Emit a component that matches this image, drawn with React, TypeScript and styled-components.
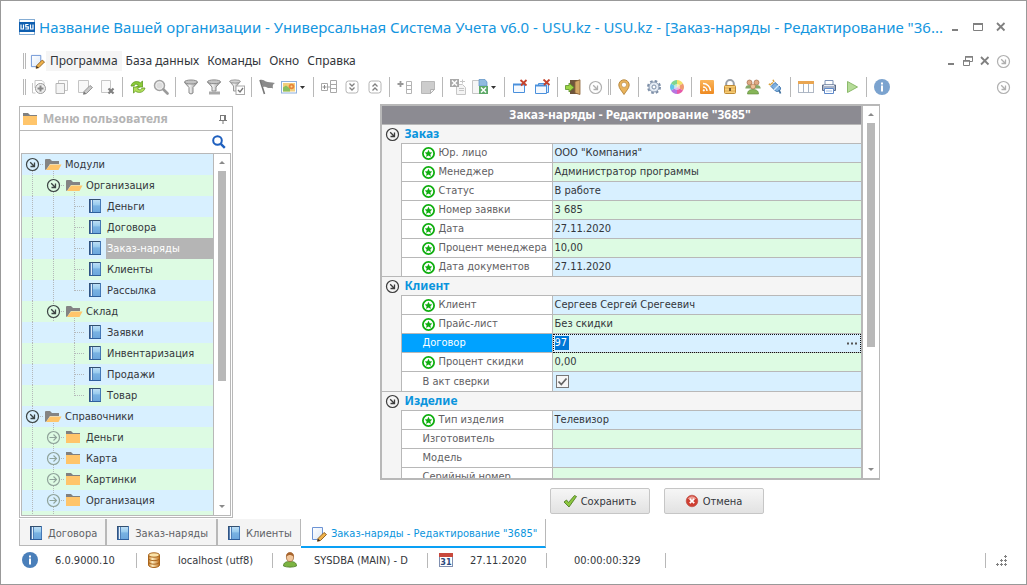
import React from "react";
import styled, { createGlobalStyle, css } from "styled-components";

/* ---------- tokens ---------- */
const line = "#b8b8b8";
const blue = "#0a94dd";
const sky = "#d8f0ff";
const mint = "#ddfbe3";
const ui = `"DejaVu Sans Condensed", "DejaVu Sans", sans-serif`;
const title = `"Noto Sans", "Open Sans", sans-serif`;

const GlobalStyle = createGlobalStyle`
  * { box-sizing: border-box; }
  body { margin: 0; background: #fff; color: #33363b; font: 11px/15px ${ui}; }
  button, input { font: inherit; color: inherit; }
  svg { display: block; flex: none; }
`;

/* ---------- icons ---------- */
type IconProps = { size?: number; children: React.ReactNode; box?: number };
const Icon = ({ size = 16, box = 16, children }: IconProps) => (
  <svg width={size} height={size} viewBox={`0 0 ${box} ${box}`} fill="none" aria-hidden="true">
    {children}
  </svg>
);

const Gradients = () => (
  <DefsSvg width="0" height="0" aria-hidden="true">
    <defs>
      <linearGradient id="book" x1="0" y1="0" x2="0" y2="1">
        <stop offset="0" stopColor="#c4e2f7" />
        <stop offset=".4" stopColor="#9accee" />
        <stop offset=".5" stopColor="#79b2e2" />
        <stop offset="1" stopColor="#6aa5dc" />
      </linearGradient>
      <linearGradient id="page" x1="0" y1="0" x2="1" y2="1">
        <stop offset="0" stopColor="#ffffff" />
        <stop offset="1" stopColor="#dce8f8" />
      </linearGradient>
      <linearGradient id="rss" x1="0" y1="0" x2="0" y2="1">
        <stop offset="0" stopColor="#fbb55a" />
        <stop offset="1" stopColor="#ee8a22" />
      </linearGradient>
      <linearGradient id="gold" x1="0" y1="0" x2="1" y2="0">
        <stop offset="0" stopColor="#c77a24" />
        <stop offset=".35" stopColor="#fff0c4" />
        <stop offset="1" stopColor="#c06f1c" />
      </linearGradient>
      <linearGradient id="grey" x1="0" y1="0" x2="1" y2="0">
        <stop offset="0" stopColor="#8f8f8f" />
        <stop offset=".4" stopColor="#f2f2f2" />
        <stop offset="1" stopColor="#8a8a8a" />
      </linearGradient>
    </defs>
  </DefsSvg>
);
const DefsSvg = styled.svg`
  position: absolute;
`;

const AppLogo = () => (
  <svg width="16" height="16" viewBox="0 0 16 16" role="img" aria-label="USU">
    <rect x="0.5" y="0.5" width="15" height="15" fill="#fff" stroke="#0a5aa8" strokeDasharray="1 1" />
    <rect x="0" y="3" width="16" height="10" fill="#0f5fb0" />
    <path d="M2 5.500v4.500h2.500v-4.500M9.500 5.500H6.800v2.300h2.500V10H6.300M11.500 5.500v4.500h2.500v-4.500" stroke="#fff" strokeWidth="1.200" fill="none" />
  </svg>
);

const PageEdit = ({ grey, size = 16 }: { grey?: boolean; size?: number }) => (
  <Icon size={size}>
    <path d="M1.500 1.500h10v8l-3 4h-7z" fill={grey ? "#f8f8f8" : "url(#page)"} stroke={grey ? "#c4c4c4" : "#6c93d4"} />
    <path d="M7 12.500l6-6 2.500 2-6 6-3 .8z" fill={grey ? "#c9c9c9" : "#f0b24a"} stroke={grey ? "#8d8d8d" : "#8a5a1c"} strokeWidth=".9" />
    <path d="M6.500 15.300l.6-2.600 2.200 2z" fill={grey ? "#777" : "#3c2c1c"} />
  </Icon>
);

const BookShape = () => (
  <>
    <rect x="0" y="0" width="12" height="14" fill="url(#book)" />
    <rect x="0" y="0" width="2" height="14" fill="#5b7fae" />
    <rect x="2" y="1" width="1" height="12" fill="#e6f2fb" />
    <path d="M.5 0v14" stroke="#2f5484" />
    <path d="M3.500 1v12" stroke="#4f80b8" />
    <path d="M0 .5h12" stroke="#33506f" />
    <path d="M11.500 0v14" stroke="#4578b6" />
    <path d="M0 13.500h12" stroke="#2f5f9c" />
  </>
);
const Book = () => (
  <svg width="14" height="14" viewBox="0 0 14 14" fill="none" aria-hidden="true">
    <g transform="translate(1 0)"><BookShape /></g>
  </svg>
);

const FolderShape = () => (
  <>
    <path d="M0 1h5l2 2h7v2H0z" fill="#808080" />
    <rect x="0" y="4" width="14" height="9" fill="#ffc56b" />
  </>
);
const FolderOpenShape = () => (
  <>
    <path d="M0 2q0-1 1-1h4l2 2h7v3H5L1 12q-1 0-1-1z" fill="#848484" />
    <path d="M5 6.500h11.500l-3 5.500H1z" fill="#ffc56b" />
  </>
);

const ringDown = "M5.200 5.200l4 4M9.500 5.500v4h-4";
const RoundArrow = ({ tone = "#3c3c3c" }: { tone?: string }) => (
  <Icon size={15} box={15}>
    <circle cx="7.500" cy="7.500" r="6" fill="none" stroke={tone} strokeWidth="1.200" />
    <path d={ringDown} stroke={tone} strokeWidth="1.300" />
  </Icon>
);

const Star = () => (
  <Icon size={15} box={15}>
    <circle cx="7.500" cy="7.500" r="5.600" fill="#fff" stroke="#0fae0f" strokeWidth="1.800" />
    <path d="M7.500 3.800l1.200 2.400 2.600.3-1.900 1.800.5 2.700-2.400-1.400-2.400 1.400.5-2.700-1.900-1.800 2.600-.3z" fill="#0fae0f" />
  </Icon>
);

const InfoIcon = ({ tone }: { tone: string }) => (
  <Icon size={16}>
    <circle cx="8" cy="8" r="8" fill={tone} />
    <path d="M8 3.500v2M8 6.500v6" stroke="#fff" strokeWidth="2" />
  </Icon>
);

const g1 = "#9a9a9a";
const g2 = "#c6c6c6";
const icons: Record<string, React.ReactNode> = {
  add: (
    <Icon>
      <path d="M4 9V1.500h7l2 2V7" stroke={g2} />
      <path d="M1.500 4v10h3" stroke={g2} />
      <circle cx="9.500" cy="9.500" r="5" fill="#eee" stroke={g1} />
      <path d="M9.500 6.500v6M6.500 9.500h6" stroke="#888" strokeWidth="2" />
    </Icon>
  ),
  copy: (
    <Icon>
      <path d="M4.500 1.500h9v10h-9z" fill="#fafafa" stroke={g2} />
      <path d="M2 4.500h8.500v10H2z" fill="#f4f4f4" stroke="#b4b4b4" />
    </Icon>
  ),
  edit: <PageEdit grey />,
  remove: (
    <Icon>
      <path d="M1.500 1.500h9v12h-9z" fill="#fafafa" stroke={g2} />
      <path d="M8.500 9.500l5 5M13.500 9.500l-5 5" stroke="#808080" strokeWidth="2.200" />
    </Icon>
  ),
  refresh: (
    <Icon>
      <path d="M1 7C2 2.500 7 1.500 10.500 3.800L12.500 2v6H6.500l2-2C6.500 4.500 4.500 5 4 7z" fill="#8ccb3a" stroke="#5f9a22" strokeWidth=".8" />
      <path d="M15 9c-1 4.500-6 5.500-9.500 3.200L3.500 14V8h6l-2 2c2 1.500 4 1 4.500-1z" fill="#b2de5a" stroke="#5f9a22" strokeWidth=".8" />
    </Icon>
  ),
  find: (
    <Icon>
      <circle cx="6.500" cy="6.500" r="5" fill="#eee" stroke="#a2a2a2" strokeWidth="1.500" />
      <circle cx="6.500" cy="6.500" r="3" fill="#dcdcdc" />
      <path d="M10.500 10.500l4 4" stroke="#9a9a9a" strokeWidth="2.600" strokeLinecap="round" />
    </Icon>
  ),
  filter: (
    <Icon>
      <path d="M1.500 3.500L6 8.500v5.500q2 2 4 0V8.500l4.500-5z" fill="url(#grey)" stroke="#8a8a8a" />
      <ellipse cx="8" cy="3" rx="6.500" ry="2" fill="#c4c4c4" stroke="#8a8a8a" />
    </Icon>
  ),
  filterEdit: (
    <Icon>
      <path d="M1.500 3L6 8v4h4V8l4.500-5z" fill="url(#grey)" stroke="#8a8a8a" />
      <ellipse cx="8" cy="2.800" rx="6.500" ry="1.900" fill="#c4c4c4" stroke="#8a8a8a" />
      <path d="M3 14h11" stroke="#a8a8a8" strokeWidth="3" />
    </Icon>
  ),
  filterCheck: (
    <Icon>
      <path d="M.7 2.500L4.500 7v5H7.500V7l3.800-4.500z" fill="url(#grey)" stroke="#9a9a9a" />
      <ellipse cx="6" cy="2.500" rx="5.300" ry="1.600" fill="#d4d4d4" stroke="#9a9a9a" />
      <rect x="7" y="7" width="8.500" height="8.500" fill="#fff" stroke="#a8a8a8" />
      <path d="M9 11l2 2 3-4" stroke="#777" strokeWidth="1.300" />
    </Icon>
  ),
  flag: (
    <Icon>
      <path d="M1 1c3-.8 4 .5 6 1.500s5 .5 9 1.500c-2.500 1-2.500 3-2 5.500-2-1-4 0-5.500-.8-2-1-3-1-4.500-.7z" fill="#8b8b8b" />
      <path d="M1 1l4.500 14" stroke="#777" strokeWidth="1.600" />
    </Icon>
  ),
  image: (
    <Icon>
      <rect x=".5" y="2.500" width="15" height="11.500" fill="#fff" stroke="#8fb0dc" />
      <rect x="2" y="4" width="12" height="8.500" fill="#f2cf7c" />
      <path d="M2 8.500l3-2 4 3v3H2z" fill="#8bbf5f" />
      <circle cx="10.500" cy="7.500" r="2.800" fill="#e8853c" />
      <circle cx="10.500" cy="7.500" r="1" fill="#fbe08a" />
    </Icon>
  ),
  tree: (
    <Icon>
      <path d="M.5 4.500h6v7h-6zM9.500 1.500h6v12h-6zM9.500 5.500h6M9.500 9.500h6M6.500 8h3" stroke="#a8a8a8" />
      <path d="M3.500 6v4M1.500 8h4" stroke="#8a8a8a" />
    </Icon>
  ),
  down2: (
    <Icon>
      <rect x="2" y="2" width="12" height="12" rx="2.500" stroke="#b4b4b4" />
      <path d="M5.500 4.500L8 7l2.500-2.500M5.500 8.500L8 11l2.500-2.500" stroke="#808080" strokeWidth="1.300" />
    </Icon>
  ),
  up2: (
    <Icon>
      <rect x="2" y="2" width="12" height="12" rx="2.500" stroke="#b4b4b4" />
      <path d="M5.500 7.500L8 5l2.500 2.500M5.500 11.500L8 9l2.500 2.500" stroke="#808080" strokeWidth="1.300" />
    </Icon>
  ),
  addRow: (
    <Icon>
      <path d="M9.500 2.500h5v12h-5zM9.500 6.500h5M9.500 10.500h5" stroke="#b4b4b4" />
      <path d="M3.500 2v6M.5 5h6" stroke="#989898" strokeWidth="1.800" />
    </Icon>
  ),
  note: (
    <Icon>
      <path d="M1.500 2.500h13v8l-4 4h-9z" fill="#cdcdcd" stroke="#b8b8b8" />
      <path d="M14.500 10.500h-4v4z" fill="#f0f0f0" stroke="#b0b0b0" />
    </Icon>
  ),
  excelGrey: (
    <Icon>
      <path d="M6.500 5.500h6l3 3v7h-9z" fill="#f4f4f4" stroke={g2} />
      <path d="M9 9.500h5M9 11.500h5" stroke={g2} />
      <rect x="0" y="0" width="9" height="8" fill="#a9a9a9" />
      <path d="M2 1.500l5 5M7 1.500l-5 5" stroke="#fff" strokeWidth="1.500" />
      <path d="M10 2.500h5M12.500 .5v4" stroke={g2} />
    </Icon>
  ),
  excel: (
    <Icon>
      <path d="M.5 1.500h9v13h-9z" fill="#f6f6f6" stroke={g2} />
      <path d="M7 .5h6l2 2.500v4H7z" fill="#8fbbe0" stroke="#5c8fc4" strokeWidth=".7" />
      <rect x="7" y="7" width="9" height="8" fill="#5da968" />
      <path d="M9 8.500l5 5M14 8.500l-5 5" stroke="#fff" strokeWidth="1.500" />
    </Icon>
  ),
  closeWin: (
    <Icon>
      <path d="M1.500 5.500h11v8h-11z" fill="#f5f9fe" stroke="#4a90dc" />
      <path d="M1 5.500h12" stroke="#4a90dc" strokeWidth="2" />
      <path d="M8.500 1l6 5.500M14.500 1L9 6.500" stroke="#c5432c" strokeWidth="1.800" />
    </Icon>
  ),
  closeAll: (
    <Icon>
      <path d="M3.500 4.500h10v9h-10z" fill="#d7e8fa" stroke="#4a90dc" />
      <path d="M.5 6.500h11v8H.5z" fill="#f5f9fe" stroke="#4a90dc" />
      <path d="M0 6.500h12" stroke="#4a90dc" strokeWidth="2" />
      <path d="M8.500 .5l6 5.500M14.500 .5L9 6" stroke="#c5432c" strokeWidth="1.800" />
    </Icon>
  ),
  exit: (
    <Icon>
      <path d="M5 1h9v14H5z" fill="#6e553c" />
      <path d="M10 2.500L15 .8v14.700L10 14z" fill="#d3a869" stroke="#8a6238" strokeWidth=".8" />
      <path d="M.5 6.500H4V4l5 4.500L4 13v-2.500H.5z" fill="#9bd545" stroke="#5c8f28" strokeWidth=".8" />
    </Icon>
  ),
  more: <RoundArrow tone="#b0b0b0" />,
  pin: (
    <Icon>
      <path d="M8 15.500C6 12 2.800 9.500 2.800 6a5.200 5.200 0 0110.400 0c0 3.500-3.200 6-5.200 9.500z" fill="#eab45c" stroke="#b98a42" />
      <circle cx="8" cy="5.800" r="2.600" fill="#fff" stroke="#b98a42" strokeWidth=".7" />
    </Icon>
  ),
  gear: (
    <Icon>
      <circle cx="8" cy="8" r="6" stroke="#7d8fa8" strokeWidth="2" strokeDasharray="2.600 2.110" />
      <circle cx="8" cy="8" r="5" fill="#e4ebf4" stroke="#8797ae" />
      <circle cx="8" cy="8" r="2" fill="#fff" stroke="#7d8fa8" />
    </Icon>
  ),
  colors: (
    <Icon>
      <path d="M8 8V1a7 7 0 016 3.500z" fill="#f2e26a" />
      <path d="M8 8l6-3.500a7 7 0 010 7z" fill="#f09a70" />
      <path d="M8 8l6 3.500A7 7 0 018 15z" fill="#e75aa8" />
      <path d="M8 8v7a7 7 0 01-6-3.500z" fill="#b774e0" />
      <path d="M8 8l-6 3.500a7 7 0 010-7z" fill="#62c4e8" />
      <path d="M8 8L2 4.500A7 7 0 018 1z" fill="#7fd690" />
      <circle cx="8" cy="8" r="3" fill="#fff" opacity=".55" />
    </Icon>
  ),
  rss: (
    <Icon>
      <rect x="1" y="1" width="14" height="14" rx="1" fill="url(#rss)" />
      <path d="M4 4.500A7.500 7.500 0 0111.500 12M4 8a4 4 0 014 4" stroke="#fff" strokeWidth="1.500" />
      <circle cx="4.800" cy="11.300" r="1.100" fill="#fff" />
    </Icon>
  ),
  lock: (
    <Icon>
      <path d="M4.200 7V4.800a3.800 3.800 0 017.600 0V7" stroke="#9aa0a8" strokeWidth="2" />
      <rect x="2.500" y="6.500" width="11" height="8" rx="1" fill="#f7cd74" stroke="#bf8a35" />
      <path d="M3 9h10M3 12h10" stroke="#dfa850" />
      <path d="M8 9v3" stroke="#5c4424" strokeWidth="1.600" />
    </Icon>
  ),
  users: (
    <Icon>
      <circle cx="4.500" cy="3.500" r="2.500" fill="#e0aa84" stroke="#99603c" strokeWidth=".6" />
      <circle cx="11.500" cy="3.500" r="2.500" fill="#e0aa84" stroke="#99603c" strokeWidth=".6" />
      <path d="M.3 9.500c0-2.500 2-3.500 4-3.500s3 1 3.700 2c.5-1 1.700-2 3.700-2s4 1 4 3.500z" fill="#86a868" />
      <circle cx="8" cy="7.500" r="2.500" fill="#f0c09a" stroke="#a5683c" strokeWidth=".6" />
      <path d="M2.500 15c0-3.500 2.500-4.500 5.500-4.500s5.500 1 5.500 4.500z" fill="#86b558" stroke="#5a8638" strokeWidth=".6" />
    </Icon>
  ),
  plug: (
    <Icon>
      <path d="M3 5L5 3.500M6 3L5 .8M3 6L.8 5" stroke="#d9a23c" strokeWidth="1.500" />
      <path d="M3 7.500L7 3.500l5 4.500c1 1.500.5 2.500-.5 3.500s-2.500 1.500-4 .5z" fill="#7db0e0" stroke="#4278b0" />
      <path d="M6 11l5-5" stroke="#d8ecfa" strokeWidth="1.200" />
      <path d="M11 11l1.500 3.500" stroke="#41719e" strokeWidth="1.800" />
    </Icon>
  ),
  table: (
    <Icon>
      <rect x=".5" y="2.500" width="15" height="11" fill="#fff" stroke="#b0b8c4" />
      <rect x="0" y="2" width="16" height="3" fill="#e9a652" />
      <path d="M5.500 5v9M10.500 5v9" stroke="#a8b4c4" />
    </Icon>
  ),
  print: (
    <Icon>
      <path d="M4 1.500h8V6H4z" fill="#fff" stroke="#7c93b8" />
      <path d="M1.500 6h13v5.500h-13z" fill="#a9b4c8" stroke="#5c6c88" />
      <path d="M3 6.500h10" stroke="#e8edf5" />
      <path d="M3.500 9.500h9v5h-9z" fill="#fff" stroke="#5f8acb" />
      <path d="M5 12h6" stroke="#a5c0e4" />
    </Icon>
  ),
  play: (
    <Icon>
      <path d="M3.500 2.500l10 5.500-10 5.500z" fill="#b5dc98" stroke="#8cba6c" />
    </Icon>
  ),
  info: <InfoIcon tone="#7ba3cf" />,
};

/* ---------- window frame ---------- */
const Window = styled.div`
  display: flex;
  flex-direction: column;
  height: 100vh;
  border: 1px solid #999;
  overflow: hidden;
`;
const TitleBar = styled.header`
  display: flex;
  flex: none;
  align-items: center;
  gap: 4px;
  height: 51px;
  padding: 0 19px 0 18px;
`;
const Title = styled.h1`
  flex: 1;
  margin: 0;
  min-width: 0;
  overflow: hidden;
  white-space: nowrap;
  font: 400 15px/24px ${title};
  color: #1496e0;
`;
const WindowButtons = styled.div<{ $gap: number }>`
  display: flex;
  align-items: center;
  gap: ${(p) => p.$gap}px;
`;
const PlainButton = styled.button`
  display: flex;
  align-items: center;
  justify-content: center;
  padding: 0;
  border: 0;
  background: none;
`;
const Bar = styled.div<{ $height: number }>`
  display: flex;
  flex: none;
  align-items: center;
  height: ${(p) => p.$height}px;
  padding: 0 15px 0 22px;
`;
const Grip = styled.span`
  width: 3px;
  height: 16px;
  border: solid ${line};
  border-width: 0 1px;
`;
const Menu = styled.nav`
  display: flex;
  flex: 1;
  align-items: center;
`;
const MenuItem = styled.button<{ $active?: boolean }>`
  height: 20px;
  padding: 0 4px;
  border: 0;
  background: ${(p) => (p.$active ? "#f5f5f5" : "none")};
  font: 12px/20px ${title};
`;
const MenuIcon = styled.span`
  padding: 0 1px 0 4px;
`;
const Tools = styled.div`
  display: flex;
  flex: 1;
  align-items: center;
  padding-left: 1px;
`;
const Tool = styled(PlainButton)<{ $drop?: boolean }>`
  width: ${(p) => (p.$drop ? 32 : 23)}px;
  height: 22px;
  gap: 3px;
  ${(p) => p.$drop && css`padding-left: 3px; justify-content: flex-start;`}
`;
const Separator = styled.span`
  width: 1px;
  height: 20px;
  margin: 0 3px;
  background: ${line};
`;
const DoubleSeparator = styled(Grip)`
  margin: 0 1px;
`;
const Caret = () => (
  <svg width="5" height="3" viewBox="0 0 5 3" aria-hidden="true">
    <path d="M0 0h5L2.500 3z" fill="#333" />
  </svg>
);

const Minimize = () => (
  <Icon size={12} box={12}>
    <path d="M3 9h6" stroke="#808080" strokeWidth="2" />
  </Icon>
);
const Maximize = () => (
  <Icon size={12} box={12}>
    <path d="M1.500 2.500h9v7h-9z" stroke="#808080" />
    <path d="M1 3h10" stroke="#808080" strokeWidth="2" />
  </Icon>
);
const Restore = () => (
  <Icon size={12} box={12}>
    <path d="M3.500 5V1.500h7v5H8M1.500 5.500h6v5h-6z" stroke="#808080" />
    <path d="M1 6h7M3 2h8" stroke="#808080" strokeWidth="1.500" />
  </Icon>
);
const Close = () => (
  <Icon size={12} box={12}>
    <path d="M2 2l7.500 7.500M9.500 2L2 9.500" stroke="#808080" strokeWidth="1.800" />
  </Icon>
);

type ToolDef = [string, string];
const tools: (ToolDef | "|" | "||")[] = [
  ["add", "Добавить"], ["copy", "Копировать"], ["edit", "Редактировать"], ["remove", "Удалить"], "|",
  ["refresh", "Обновить"], ["find", "Поиск"], "|",
  ["filter", "Фильтр"], ["filterEdit", "Строка фильтра"], ["filterCheck", "Настройка фильтра"], "|",
  ["flag", "Флаг"], ["image", "Изображение"], "|",
  ["tree", "Группы"], ["down2", "Развернуть"], ["up2", "Свернуть"], "|",
  ["addRow", "Добавить строку"], ["note", "Заметка"], "|",
  ["excelGrey", "Импорт"], ["excel", "Экспорт"], "|",
  ["closeWin", "Закрыть окно"], ["closeAll", "Закрыть все окна"], "|",
  ["exit", "Выход"], ["more", "Ещё"], "||",
  ["pin", "Карта"], "|",
  ["gear", "Настройки"], ["colors", "Оформление"], "|",
  ["rss", "Новости"], ["lock", "Доступ"], ["users", "Пользователи"], ["plug", "Подключение"], "|",
  ["table", "Отчёт"], ["print", "Печать"], ["play", "Запуск"], "|",
  ["info", "О программе"],
];

/* ---------- work area ---------- */
const Work = styled.main`
  display: flex;
  flex: 1;
  min-height: 0;
  align-items: stretch;
`;

/* ---------- navigation panel ---------- */
const Sidebar = styled.aside`
  display: flex;
  flex-direction: column;
  flex: none;
  width: 214px;
  margin: 2px 0 1px 18px;
  border: 1px solid ${line};
`;
const SidebarHead = styled.div`
  display: flex;
  align-items: center;
  gap: 5px;
  height: 24px;
  padding: 0 3px;
  border-bottom: 1px solid ${line};
`;
const SidebarTitle = styled.h2`
  flex: 1;
  margin: 0;
  font: 700 12px/16px ${title};
  color: #b4b4b4;
`;
const SearchRow = styled.label`
  display: flex;
  align-items: center;
  height: 22px;
  padding: 0 6px;
`;
const SearchInput = styled.input`
  flex: 1;
  min-width: 0;
  height: 18px;
  padding: 0;
  border: 0;
  outline: 0;
  background: none;
`;
const TreeBox = styled.div`
  display: flex;
  flex: 1;
  min-height: 0;
  margin: 0 1px 1px;
  border: 1px solid ${line};
`;
const Tree = styled.ul`
  flex: 1;
  margin: 0;
  padding: 0;
  overflow: hidden;
  list-style: none;
`;
const TreeRow = styled.li<{ $odd: boolean }>`
  display: flex;
  height: 21px;
  background: ${(p) => (p.$odd ? mint : sky)};
`;
const TreeLabel = styled.span<{ $selected: boolean }>`
  flex: 1;
  padding-left: 1px;
  line-height: 22px;
  white-space: nowrap;
  ${(p) => p.$selected && css`background: #b5b5b5; color: #fff;`}
`;
const ScrollBar = styled.div<{ $edge?: boolean }>`
  display: flex;
  flex-direction: column;
  align-items: center;
  flex: none;
  width: ${(p) => (p.$edge ? 18 : 17)}px;
  padding: 7px 0;
  background: #fff;
  border-left: ${(p) => (p.$edge ? 2 : 1)}px solid ${line};
`;
const ScrollTrack = styled.div`
  flex: 1;
  width: 8px;
  margin: 7px 0 6px;
`;
const ScrollThumb = styled.div<{ $part: number }>`
  height: ${(p) => p.$part}%;
  background: ${line};
`;
const Tip = ({ up }: { up?: boolean }) => (
  <svg width="6" height="3" viewBox="0 0 6 3" aria-hidden="true">
    <path d={up ? "M0 3h6L3 0z" : "M0 0h6L3 3z"} fill="#8a8a8a" />
  </svg>
);

type Guide = "" | "line" | "branch" | "last" | "open" | "openTop" | "closed";
const GuideCell = ({ kind }: { kind: Guide }) => {
  const dot = { stroke: "#b4b8ba", strokeDasharray: "1 1" };
  const faint = kind === "closed";
  return (
    <svg width="21" height="21" viewBox="0 0 21 21" fill="none" aria-hidden="true">
      {(kind === "line" || kind === "branch") && <path d="M10.500 0v21" {...dot} />}
      {kind === "last" && <path d="M10.500 0v11" {...dot} />}
      {(kind === "open" || faint) && <path d="M10.500 0v4M10.500 17v4" {...dot} />}
      {kind === "openTop" && <path d="M10.500 17v4" {...dot} />}
      {(kind === "branch" || kind === "last") && <path d="M11 10.500h10" {...dot} />}
      {(kind === "open" || kind === "openTop" || faint) && (
        <>
          <path d="M18 10.500h3" {...dot} />
          <circle cx="10.500" cy="10.500" r="6" fill="none" stroke={faint ? "#8fa39a" : "#3c4444"} strokeWidth="1.200" />
          {faint ? (
            <path d="M6.500 10.500h7M10.500 7.500l3 3-3 3" stroke="#8fa39a" strokeWidth="1.100" />
          ) : (
            <g transform="translate(3 3)"><path d={ringDown} stroke="#3c4444" strokeWidth="1.300" /></g>
          )}
        </>
      )}
    </svg>
  );
};
const NodeIcon = ({ kind }: { kind: "open" | "folder" | "book" }) => (
  <svg width="21" height="21" viewBox="0 0 21 21" fill="none" aria-hidden="true">
    {kind === "open" && (
      <>
        <path d="M10.500 17v4" stroke="#b4b8ba" strokeDasharray="1 1" />
        <g transform="translate(2 4)"><FolderOpenShape /></g>
      </>
    )}
    {kind === "folder" && <g transform="translate(2 3)"><FolderShape /></g>}
    {kind === "book" && <g transform="translate(4 3)"><BookShape /></g>}
  </svg>
);

type Node = { text: string; guides: Guide[]; icon: "open" | "folder" | "book"; selected?: boolean };
const nodes: Node[] = [
  { text: "Модули", guides: ["openTop"], icon: "open" },
  { text: "Организация", guides: ["line", "open"], icon: "open" },
  { text: "Деньги", guides: ["line", "line", "branch"], icon: "book" },
  { text: "Договора", guides: ["line", "line", "branch"], icon: "book" },
  { text: "Заказ-наряды", guides: ["line", "line", "branch"], icon: "book", selected: true },
  { text: "Клиенты", guides: ["line", "line", "branch"], icon: "book" },
  { text: "Рассылка", guides: ["line", "line", "last"], icon: "book" },
  { text: "Склад", guides: ["line", "open"], icon: "open" },
  { text: "Заявки", guides: ["line", "", "branch"], icon: "book" },
  { text: "Инвентаризация", guides: ["line", "", "branch"], icon: "book" },
  { text: "Продажи", guides: ["line", "", "branch"], icon: "book" },
  { text: "Товар", guides: ["line", "", "last"], icon: "book" },
  { text: "Справочники", guides: ["open"], icon: "open" },
  { text: "Деньги", guides: ["line", "closed"], icon: "folder" },
  { text: "Карта", guides: ["line", "closed"], icon: "folder" },
  { text: "Картинки", guides: ["line", "closed"], icon: "folder" },
  { text: "Организация", guides: ["line", "closed"], icon: "folder" },
  { text: "", guides: ["line", "closed"], icon: "folder" },
];

/* ---------- record editor ---------- */
const Editor = styled.form`
  display: flex;
  flex: 1;
  flex-direction: column;
  align-items: center;
  min-width: 0;
`;
const EditorBody = styled.div`
  display: flex;
  flex-direction: column;
  gap: 8px;
  width: 500px;
  max-width: 100%;
  height: 100%;
  padding-bottom: 5px;
`;
const Sheet = styled.section`
  display: flex;
  flex: 1;
  min-height: 0;
  border: solid ${line};
  border-width: 2px 1px 2px 2px;
`;
const SheetMain = styled.div`
  flex: 1;
  min-width: 0;
  overflow: hidden;
`;
const SheetTitle = styled.h2`
  margin: 0;
  height: 19px;
  padding-left: 18px;
  border-bottom: 1px solid ${line};
  background: #8c8b92;
  font: 700 12px/18px ${title};
  color: #fff;
  text-align: center;
`;
const Grid = styled.table`
  width: 100%;
  table-layout: fixed;
  border-spacing: 0;
  background: #f5f5f5;
  td, th { padding: 0; }
`;
const ColIndent = styled.col`
  width: 19px;
`;
const ColLabel = styled.col`
  width: 152px;
`;
const Indent = styled.td<{ $last?: boolean }>`
  ${(p) => p.$last && css`border-bottom: 1px solid ${line};`}
`;
const GroupIcon = styled.span`
  display: flex;
  padding-left: 3px;
`;
const GroupHead = styled.th`
  height: 19px;
  border-bottom: 1px solid ${line};
  text-align: left;
  font: 700 12px/18px ${title};
  color: ${blue};
`;
const GroupText = styled.span`
  padding-left: 4px;
`;
const LabelCell = styled.th<{ $active?: boolean }>`
  height: 19px;
  border: solid ${line};
  border-width: 0 1px 1px;
  background: ${(p) => (p.$active ? "#00a2ff" : "#fff")};
  color: ${(p) => (p.$active ? "#fff" : "#5f6063")};
  font-weight: 400;
`;
const LabelInner = styled.label<{ $star?: boolean }>`
  display: flex;
  align-items: center;
  gap: 3px;
  height: 18px;
  padding-left: ${(p) => (p.$star ? 19 : 21)}px;
  line-height: 18px;
  white-space: nowrap;
`;
const ValueCell = styled.td<{ $odd: boolean; $active?: boolean }>`
  border-bottom: 1px solid ${line};
  background: ${(p) => (p.$odd ? mint : sky)};
  line-height: 18px;
  ${(p) => p.$active && css`outline: 1px dotted #111; outline-offset: -1px;`}
`;
const ValueText = styled.span`
  display: flex;
  align-items: center;
  height: 18px;
  padding-left: 2px;
  white-space: nowrap;
`;
const ActiveEditor = styled.div`
  display: flex;
  align-items: center;
  height: 18px;
  padding: 0 3px 0 2px;
`;
const ActiveInput = styled.input`
  width: 14px;
  height: 14px;
  padding: 0;
  border: 0;
  outline: 0;
  background: #0078d7;
  color: #fff;
`;
const Spacer = styled.span`
  flex: 1;
`;
const CheckWrap = styled.span`
  display: flex;
  align-items: center;
  height: 19px;
  padding-left: 3px;
`;
const CheckBox = styled.input`
  appearance: none;
  width: 13px;
  height: 13px;
  margin: 0;
  border: 1px solid #777;
  background: #f6f6f6
    url("data:image/svg+xml,%3Csvg xmlns='http://www.w3.org/2000/svg' viewBox='0 0 11 11'%3E%3Cpath d='M1.500 5.500l2.800 3L9.500 2.500' fill='none' stroke='%23666' stroke-width='1.800'/%3E%3C/svg%3E")
    center / 11px no-repeat;
`;
const Actions = styled.div`
  display: flex;
  gap: 14px;
  padding-left: 170px;
`;
const ActionButton = styled.button`
  display: flex;
  align-items: center;
  justify-content: center;
  gap: 4px;
  width: 100px;
  height: 26px;
  padding: 0;
  border: 1px solid #c6c6c6;
  border-radius: 2px;
  background: linear-gradient(#f6f6f6, #e2e2e2);
`;

type Field = { label: string; value: string; star?: boolean; kind?: "active" | "check" };
const groups: { name: string; fields: Field[] }[] = [
  {
    name: "Заказ",
    fields: [
      { label: "Юр. лицо", value: 'ООО "Компания"', star: true },
      { label: "Менеджер", value: "Администратор программы", star: true },
      { label: "Статус", value: "В работе", star: true },
      { label: "Номер заявки", value: "3 685", star: true },
      { label: "Дата", value: "27.11.2020", star: true },
      { label: "Процент менеджера", value: "10,00", star: true },
      { label: "Дата документов", value: "27.11.2020", star: true },
    ],
  },
  {
    name: "Клиент",
    fields: [
      { label: "Клиент", value: "Сергеев Сергей Срегеевич", star: true },
      { label: "Прайс-лист", value: "Без скидки", star: true },
      { label: "Договор", value: "97", kind: "active" },
      { label: "Процент скидки", value: "0,00", star: true },
      { label: "В акт сверки", value: "", kind: "check" },
    ],
  },
  {
    name: "Изделие",
    fields: [
      { label: "Тип изделия", value: "Телевизор", star: true },
      { label: "Изготовитель", value: "" },
      { label: "Модель", value: "" },
      { label: "Серийный номер", value: "" },
    ],
  },
];

const FieldRow = ({ field, odd, last }: { field: Field; odd: boolean; last: boolean }) => {
  const active = field.kind === "active";
  const id = field.kind ? `field-${field.kind}` : undefined;
  return (
    <tr>
      <Indent $last={last} />
      <LabelCell scope="row" $active={active}>
        <LabelInner as={id ? "label" : "span"} htmlFor={id} $star={field.star}>
          {field.star && <Star />}
          {field.label}
        </LabelInner>
      </LabelCell>
      <ValueCell $odd={odd} $active={active}>
        {active && (
          <ActiveEditor>
            <ActiveInput id={id} type="text" defaultValue={field.value} />
            <Spacer />
            <PlainButton type="button" aria-label="Выбрать">
              <svg width="12" height="3" viewBox="0 0 12 3" aria-hidden="true">
                <path d="M1 1.500h2M5 1.500h2M9 1.500h2" stroke="#555" strokeWidth="2" />
              </svg>
            </PlainButton>
          </ActiveEditor>
        )}
        {field.kind === "check" && (
          <CheckWrap>
            <CheckBox id={id} type="checkbox" defaultChecked />
          </CheckWrap>
        )}
        {!field.kind && <ValueText>{field.value}</ValueText>}
      </ValueCell>
    </tr>
  );
};

/* ---------- document tabs and status line ---------- */
const Tabs = styled.nav`
  display: flex;
  flex: none;
  height: 29px;
  padding-left: 18px;
`;
const Tab = styled.button<{ $active?: boolean }>`
  display: flex;
  align-items: center;
  gap: 5px;
  height: 27px;
  padding: 2px 8px 0 9px;
  border: solid ${line};
  border-width: 0 1px 1px 1px;
  background: #f4f4f4;
  color: #606266;
  white-space: nowrap;
  ${(p) =>
    p.$active &&
    css`
      height: 29px;
      padding: 2px 8px 0 10px;
      gap: 4px;
      border-width: 0 1px 2px 0;
      border-bottom-color: #0aa0f5;
      background: #fff;
      color: ${blue};
    `}
`;
const StatusBar = styled.footer`
  display: flex;
  flex: none;
  align-items: center;
  height: 36px;
  padding: 0 18px 12px 21px;
`;
const StatusItem = styled.span<{ $width: number; $gap: number; $lead?: number }>`
  display: flex;
  align-items: center;
  gap: ${(p) => p.$gap}px;
  width: ${(p) => p.$width}px;
  height: 15px;
  padding-left: ${(p) => p.$lead || 0}px;
  border-right: 1px solid ${line};
  white-space: nowrap;
`;
const StatusRest = styled.span`
  flex: 1;
  height: 15px;
  margin-right: 9px;
  border-right: 1px solid ${line};
`;

export default function App() {
  return (
    <Window>
      <GlobalStyle />
      <Gradients />
      <TitleBar>
        <AppLogo />
        <Title>
          Название Вашей организации - Универсальная Система Учета v6.0 - USU.kz - USU.kz - [Заказ-наряды - Редактирование "36...
        </Title>
        <WindowButtons $gap={11}>
          <PlainButton aria-label="Свернуть"><Minimize /></PlainButton>
          <PlainButton aria-label="Развернуть"><Maximize /></PlainButton>
          <PlainButton aria-label="Закрыть"><Close /></PlainButton>
        </WindowButtons>
      </TitleBar>

      <Bar $height={18}>
        <Grip />
        <MenuIcon><PageEdit size={15} /></MenuIcon>
        <Menu>
          {["Программа", "База данных", "Команды", "Окно", "Справка"].map((m, i) => (
            <MenuItem key={m} $active={i === 0}>{m}</MenuItem>
          ))}
        </Menu>
        <WindowButtons $gap={5}>
          <PlainButton aria-label="Свернуть документ"><Minimize /></PlainButton>
          <PlainButton aria-label="Восстановить документ"><Restore /></PlainButton>
          <PlainButton aria-label="Закрыть документ"><Close /></PlainButton>
          <PlainButton aria-label="Ещё"><RoundArrow tone="#b0b0b0" /></PlainButton>
        </WindowButtons>
      </Bar>

      <Bar $height={34}>
        <Grip />
        <Tools role="toolbar">
          {tools.map((t, i) => {
            if (t === "|") return <Separator key={i} />;
            if (t === "||") return <DoubleSeparator key={i} />;
            const drop = t[0] === "image" || t[0] === "excel";
            return (
              <Tool key={i} aria-label={t[1]} $drop={drop}>
                {icons[t[0]]}
                {drop && <Caret />}
              </Tool>
            );
          })}
        </Tools>
        <PlainButton aria-label="Настроить панель"><RoundArrow tone="#b0b0b0" /></PlainButton>
      </Bar>

      <Work>
        <Sidebar>
          <SidebarHead>
            <svg width="15" height="14" viewBox="0 0 15 14" aria-hidden="true"><FolderShape /></svg>
            <SidebarTitle>Меню пользователя</SidebarTitle>
            <PlainButton aria-label="Закрепить">
              <Icon size={12} box={12}>
                <path d="M3.500 2v5M8.500 2v5M3 2.500h6M2 7.500h8M6 8v3" stroke="#7a7a7a" />
                <path d="M7.500 2v5" stroke="#7a7a7a" />
              </Icon>
            </PlainButton>
          </SidebarHead>
          <SearchRow>
            <SearchInput type="text" aria-label="Поиск в меню" />
            <Icon size={14} box={14}>
              <circle cx="5.500" cy="5.500" r="4.300" stroke="#1e5fbe" strokeWidth="2" />
              <path d="M8.800 8.800l4 4" stroke="#1e5fbe" strokeWidth="2.400" />
            </Icon>
          </SearchRow>
          <TreeBox>
            <Tree>
              {nodes.map((n, i) => (
                <TreeRow key={i} $odd={i % 2 === 1}>
                  {n.guides.map((g, k) => <GuideCell key={k} kind={g} />)}
                  <NodeIcon kind={n.icon} />
                  <TreeLabel $selected={!!n.selected}>{n.text}</TreeLabel>
                </TreeRow>
              ))}
            </Tree>
            <ScrollBar>
              <Tip up />
              <ScrollTrack><ScrollThumb $part={64} /></ScrollTrack>
              <Tip />
            </ScrollBar>
          </TreeBox>
        </Sidebar>

        <Editor onSubmit={(e) => e.preventDefault()}>
          <EditorBody>
            <Sheet>
              <SheetMain>
                <SheetTitle>Заказ-наряды - Редактирование "3685"</SheetTitle>
                <Grid>
                  <colgroup>
                    <ColIndent />
                    <ColLabel />
                    <col />
                  </colgroup>
                  {groups.map((g) => (
                    <tbody key={g.name}>
                      <tr>
                        <td><GroupIcon><RoundArrow /></GroupIcon></td>
                        <GroupHead colSpan={2} scope="rowgroup"><GroupText>{g.name}</GroupText></GroupHead>
                      </tr>
                      {g.fields.map((f, i) => (
                        <FieldRow key={f.label} field={f} odd={i % 2 === 1} last={i === g.fields.length - 1} />
                      ))}
                    </tbody>
                  ))}
                </Grid>
              </SheetMain>
              <ScrollBar $edge>
                <Tip up />
                <ScrollTrack><ScrollThumb $part={66} /></ScrollTrack>
                <Tip />
              </ScrollBar>
            </Sheet>
            <Actions>
              <ActionButton type="submit">
                <Icon size={14} box={14}>
                  <path d="M1 8l2.500-2 2 2.500L11.500 1.500l2 1L6 13z" fill="#8cc63f" stroke="#4f7f24" strokeWidth=".9" />
                </Icon>
                Сохранить
              </ActionButton>
              <ActionButton type="button">
                <Icon size={14} box={14}>
                  <circle cx="7" cy="7" r="5.800" fill="#cf3f32" stroke="#b8473c" strokeWidth=".6" />
                  <path d="M2.500 5a5 5 0 019 0z" fill="#ea9a90" />
                  <path d="M4.800 4.800l4.400 4.400M9.200 4.800L4.800 9.200" stroke="#fff" strokeWidth="1.800" />
                </Icon>
                Отмена
              </ActionButton>
            </Actions>
          </EditorBody>
        </Editor>
      </Work>

      <Tabs>
        <Tab><Book />Договора</Tab>
        <Tab><Book />Заказ-наряды</Tab>
        <Tab><Book />Клиенты</Tab>
        <Tab $active><PageEdit />Заказ-наряды - Редактирование "3685"</Tab>
      </Tabs>

      <StatusBar>
        <StatusItem $width={115} $gap={17}>
          <InfoIcon tone="#4a7fba" />
          6.0.9000.10
        </StatusItem>
        <StatusItem $width={136} $gap={16} $lead={9}>
          <Icon>
            <path d="M2.500 3v10c0 1.300 2.500 2.500 5.500 2.500s5.500-1.200 5.500-2.500V3" fill="url(#gold)" stroke="#a8641c" />
            <ellipse cx="8" cy="3" rx="5.500" ry="2.200" fill="#fbe3a8" stroke="#a8641c" />
            <path d="M2.500 6.500c0 1.200 2.500 2.200 5.500 2.200s5.500-1 5.500-2.200M2.500 10c0 1.200 2.500 2.200 5.500 2.200s5.500-1 5.500-2.200" stroke="#a8641c" />
          </Icon>
          localhost (utf8)
        </StatusItem>
        <StatusItem $width={155} $gap={16} $lead={9}>
          <Icon>
            <path d="M1.500 14c0-3.500 2.500-4.500 6.500-4.500s6.500 1 6.500 4.500c-3 1.500-10 1.500-13 0z" fill="#7cb342" stroke="#4d7c28" strokeWidth=".8" />
            <ellipse cx="8" cy="5" rx="3.600" ry="4.500" fill="#f2c79c" stroke="#9a6030" strokeWidth=".7" />
            <path d="M4.200 5c-.5-6 8-6 7.600 0-1-1.500-3-2-4.500-2-1 0-2.500 1-3.100 2z" fill="#a8642c" />
          </Icon>
          SYSDBA (MAIN) - D
        </StatusItem>
        <StatusItem $width={119} $gap={16} $lead={10}>
          <Icon>
            <rect x="1.500" y="1.500" width="13" height="13" fill="#fff" stroke="#7f8fb0" />
            <rect x="1" y="1" width="14" height="4" fill="#c8483c" />
            <text x="8" y="13" fontSize="9" fontWeight="700" textAnchor="middle" fill="#2e4a7c">31</text>
          </Icon>
          27.11.2020
        </StatusItem>
        <StatusItem $width={119} $gap={0} $lead={27}>00:00:00:329</StatusItem>
        <StatusRest />
        <Icon size={13} box={13}>
          <path d="M9 2.500h3M5 6.500h3M9 6.500h3M1 10.500h3M5 10.500h3M9 10.500h3M10.500 1v3M6.500 5v3M10.500 5v3M2.500 9v3M6.500 9v3M10.500 9v3" stroke="#808080" />
        </Icon>
      </StatusBar>
    </Window>
  );
}
